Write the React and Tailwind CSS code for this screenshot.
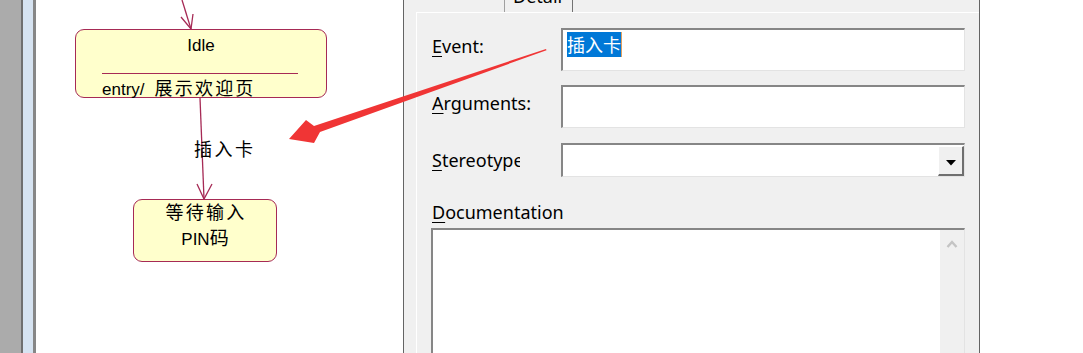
export default function App() {
  const crimson = "#a62a55";
  return (
    <div className="relative flex h-[353px] w-[1083px] overflow-hidden bg-white text-black font-['Noto_Sans','Noto_Sans_CJK_SC',sans-serif]">
      {/* left strips */}
      <div className="w-[21px] shrink-0 bg-[#ababab]" />
      <div className="w-[2px] shrink-0 bg-[#6f6f6f]" />
      <div className="w-[10px] shrink-0 bg-[#d6e3f1]" />
      <div className="w-[3px] shrink-0 bg-[#878787]" />

      {/* diagram canvas */}
      <div className="relative w-[367px] shrink-0 bg-white font-['Liberation_Sans','Noto_Sans_CJK_SC',sans-serif] text-[17px]">
        <svg className="absolute inset-0" width="367" height="353">
          <g stroke={crimson} strokeWidth="1.3" fill="none">
            <path d="M146 0 L155 29" />
            <path d="M145 17 L155 29 L157 14" />
            <path d="M164 98 L168 199" />
            <path d="M161 184 L168 199 L176 184" />
          </g>
        </svg>

        <div className="absolute left-[39px] top-[29px] h-[69px] w-[252px] rounded-[9px] border border-[#a62a55] bg-[#ffffcc]">
          <div className="mt-[6px] text-center leading-[20px]">Idle</div>
          <div className="ml-[26px] mt-[17px] h-px w-[196px] bg-[#a62a55]" />
          <div className="ml-[26px] mt-[5px] whitespace-nowrap leading-[20px]">
            entry/<span className="ml-[10px] text-[18px] tracking-[2.2px]">展示欢迎页</span>
          </div>
        </div>

        <div className="absolute left-[158px] top-[139px] whitespace-nowrap text-[18px] leading-[22px] tracking-[2.5px]">
          插入卡
        </div>

        <div className="absolute left-[97px] top-[199px] h-[63px] w-[144px] rounded-[9px] border border-[#a62a55] bg-[#ffffcc] text-center leading-[26px]">
          <div className="pl-[2px] text-[18px] tracking-[2.2px]">等待输入</div>
          <div>
            PIN<span className="text-[19px]">码</span>
          </div>
        </div>
      </div>

      <div className="w-px shrink-0 bg-[#646464]" />

      {/* property panel */}
      <div className="flex w-[575px] shrink-0 flex-col bg-[#f0f0f0] text-[18px]">
        <div className="flex h-[12px] shrink-0">
          <div className="ml-[100px] h-full w-[69px] overflow-hidden border-l border-r border-l-[#a0a0a0] border-r-[#737373]">
            <div className="-mt-[16px] pl-[8px] leading-[24px]">Detail</div>
          </div>
        </div>

        <div className="ml-[12px] flex flex-1 flex-col border-l border-t border-white pl-[15px] pt-[15px]">
          {/* Event */}
          <div className="flex h-[43px]">
            <div className="w-[129px] pt-[6px] leading-[24px]">
              <span className="underline underline-offset-[3px]">E</span>vent:
            </div>
            <div className="w-[404px] border-b border-l-2 border-r border-t-2 border-b-[#e3e3e3] border-l-[#868686] border-r-[#e3e3e3] border-t-[#868686] bg-white pl-[4px] pt-[2px]">
              <span className="inline-block h-[25px] border-r border-r-[#e0a060] bg-[#0078d7] leading-[25px] text-white font-['Noto_Sans_CJK_SC',sans-serif]">
                插入卡
              </span>
            </div>
          </div>

          {/* Arguments */}
          <div className="mt-[14px] flex h-[43px]">
            <div className="w-[129px] pt-[6px] leading-[24px]">
              <span className="underline underline-offset-[3px]">A</span>rguments:
            </div>
            <div className="w-[404px] border-b border-l-2 border-r border-t-2 border-b-[#e3e3e3] border-l-[#868686] border-r-[#e3e3e3] border-t-[#868686] bg-white" />
          </div>

          {/* Stereotype */}
          <div className="mt-[15px] flex h-[34px]">
            <div className="w-[129px]">
              <div className="w-[88px] overflow-hidden whitespace-nowrap pt-[5px] leading-[24px]">
                <span className="underline underline-offset-[3px]">S</span>tereotype
              </div>
            </div>
            <div className="flex w-[404px] justify-end border-b border-l-2 border-r border-t-2 border-b-[#e3e3e3] border-l-[#868686] border-r-[#e3e3e3] border-t-[#868686] bg-white">
              <div className="mt-px flex h-[30px] w-[26px] items-center justify-center border-b-2 border-l border-r-2 border-t border-b-[#6f6f6f] border-l-white border-r-[#6f6f6f] border-t-white bg-[#f0f0f0] pt-[5px]">
                <svg width="10" height="6" viewBox="0 0 10 6">
                  <path d="M0 0 L10 0 L5 5.5 Z" fill="#000" />
                </svg>
              </div>
            </div>
          </div>

          {/* Documentation */}
          <div className="mt-[23px] w-[132px] overflow-hidden whitespace-nowrap leading-[24px]">
            <span className="underline underline-offset-[3px]">D</span>ocumentation
          </div>
          <div className="-ml-px mt-[4px] flex h-[140px] w-[534px] border-b border-l-2 border-r border-t-2 border-b-[#e3e3e3] border-l-[#868686] border-r-[#e3e3e3] border-t-[#868686] bg-white">
            <div className="flex-1" />
            <div className="flex w-[24px] justify-center bg-[#f0f0f0] pt-[10px]">
              <svg width="12" height="8" viewBox="0 0 12 8">
                <path d="M1.5 7 L6 2 L10.5 7" stroke="#c4c4c4" strokeWidth="2.4" fill="none" />
              </svg>
            </div>
          </div>
        </div>
      </div>

      <div className="w-px shrink-0 bg-[#646464]" />
      <div className="flex-1 bg-white" />

      {/* red annotation arrow */}
      <svg className="pointer-events-none absolute left-0 top-0" width="1083" height="353">
        <path
          d="M289 139 L306 120 L314 126 L546 49 L546.5 50.2 L320 132 L314 143 Z"
          fill="#f03535"
        />
      </svg>
    </div>
  );
}
